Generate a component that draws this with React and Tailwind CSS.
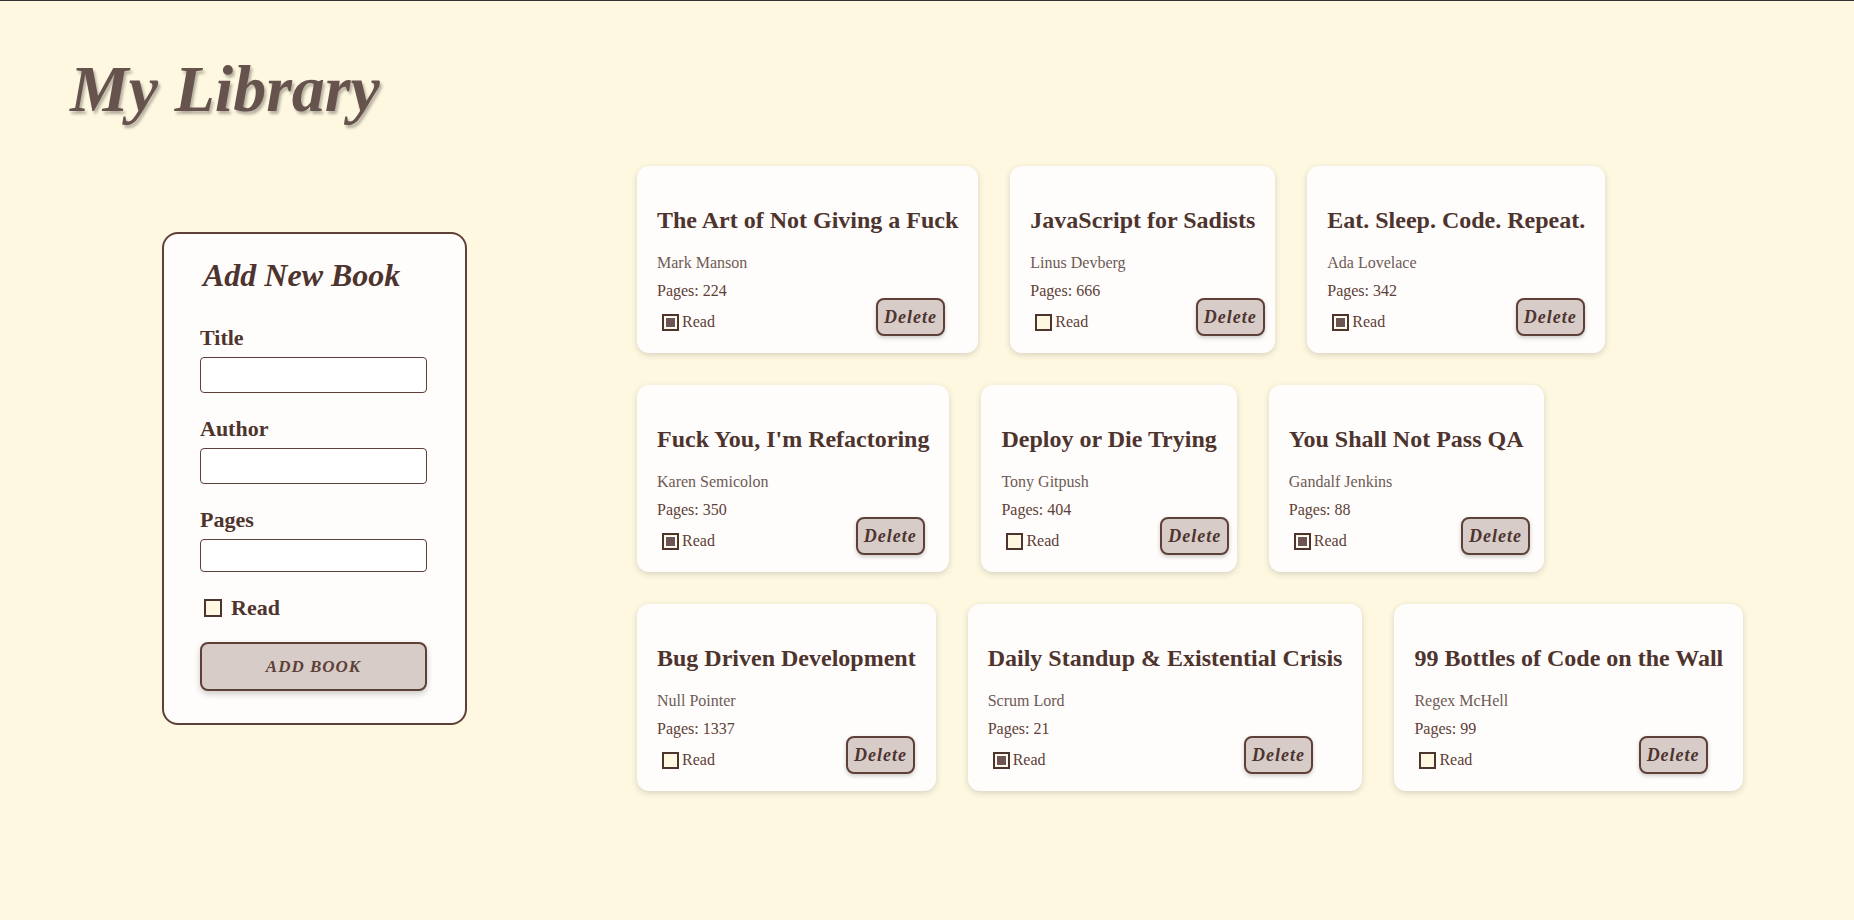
import React from "react";

const books = [
  { title: "The Art of Not Giving a Fuck", author: "Mark Manson", pages: 224, read: true },
  { title: "JavaScript for Sadists", author: "Linus Devberg", pages: 666, read: false },
  { title: "Eat. Sleep. Code. Repeat.", author: "Ada Lovelace", pages: 342, read: true },
  { title: "Fuck You, I'm Refactoring", author: "Karen Semicolon", pages: 350, read: true },
  { title: "Deploy or Die Trying", author: "Tony Gitpush", pages: 404, read: false },
  { title: "You Shall Not Pass QA", author: "Gandalf Jenkins", pages: 88, read: true },
  { title: "Bug Driven Development", author: "Null Pointer", pages: 1337, read: false },
  { title: "Daily Standup & Existential Crisis", author: "Scrum Lord", pages: 21, read: true },
  { title: "99 Bottles of Code on the Wall", author: "Regex McHell", pages: 99, read: false },
];

function Check({ checked }) {
  return (
    <span className="flex h-[17px] w-[17px] items-center justify-center border-2 border-[#4e342e] bg-[#fff8e1]">
      {checked && <span className="h-[9px] w-[9px] bg-[#6d5651] outline outline-1 outline-white" />}
    </span>
  );
}

function BookCard({ book }) {
  return (
    <div className="rounded-[12px] bg-[#fffdfb] px-5 pt-5 pb-[17px] shadow-[0_2px_6px_rgba(0,0,0,0.16)]">
      <h3 className="mt-5 whitespace-nowrap text-[24px] font-bold leading-[28px] text-[#4e342e]">{book.title}</h3>
      <p className="mt-[15px] text-[16px] leading-[28px] text-[#6d5a55]">{book.author}</p>
      <p className="text-[16px] leading-[28px] text-[#5d4037]">Pages: {book.pages}</p>
      <div className="mt-[-7px] flex items-end">
        <div className="mb-[2px] flex basis-[calc(70%+8px)] shrink-0 items-center gap-[3px] pl-[5px]">
          <Check checked={book.read} />
          <span className="text-[16px] leading-[24px] text-[#5d4037]">Read</span>
        </div>
        <button className="h-[38px] rounded-[8px] border-2 border-[#5d4037] bg-[#d7ccc8] px-[6px] text-[18px] font-bold italic tracking-[1px] text-[#4e342e] shadow-[0_2px_4px_rgba(0,0,0,0.2)]">
          Delete
        </button>
      </div>
    </div>
  );
}

function AddForm() {
  return (
    <div className="w-[305px] rounded-[16px] border-2 border-[#5d4037] bg-[#fffdfb] pl-[36px] pt-[21px] pb-[32px]">
      <h2 className="ml-[3px] text-[32px] font-bold italic leading-[40px] text-[#4e342e]">Add New Book</h2>
      <label className="mt-[29px] block text-[22px] font-bold leading-[28px] text-[#4e342e]">Title</label>
      <input className="mt-[5px] block h-[36px] w-[227px] rounded-[4px] border border-[#5d4037] bg-white" />
      <label className="mt-[22px] block text-[22px] font-bold leading-[28px] text-[#4e342e]">Author</label>
      <input className="mt-[5px] block h-[36px] w-[227px] rounded-[4px] border border-[#5d4037] bg-white" />
      <label className="mt-[22px] block text-[22px] font-bold leading-[28px] text-[#4e342e]">Pages</label>
      <input type="number" className="mt-[5px] block h-[33px] w-[227px] rounded-[4px] border border-[#5d4037] bg-white" />
      <div className="mt-[22px] flex items-center gap-[9px] pl-[4px]">
        <span className="h-[18px] w-[18px] border-2 border-[#4e342e] bg-[#fff8e1]" />
        <span className="text-[22px] font-bold leading-[28px] text-[#4e342e]">Read</span>
      </div>
      <button className="mt-[20px] h-[49px] w-[227px] rounded-[8px] border-2 border-[#5d4037] bg-[#d7ccc8] text-[17px] font-bold italic tracking-[1px] text-[#5d4037] shadow-[0_3px_6px_rgba(0,0,0,0.2)]">
        ADD BOOK
      </button>
    </div>
  );
}

export default function App() {
  return (
    <div className="min-h-screen border-t border-[#333] bg-[#fff8e1] font-['Liberation_Serif',serif]">
      <h1 className="pl-[70px] pt-[55px] text-[66px] font-bold italic leading-[66px] text-[#66534e] [text-shadow:2px_3px_3px_rgba(0,0,0,0.3)]">
        My Library
      </h1>
      <div className="mt-[44px] flex items-center pb-10">
        <div className="flex w-[629px] shrink-0 justify-center">
          <AddForm />
        </div>
        <div className="flex flex-1 flex-wrap content-start gap-8 pl-2 pr-10">
          {books.map((b) => (
            <BookCard key={b.title} book={b} />
          ))}
        </div>
      </div>
    </div>
  );
}
